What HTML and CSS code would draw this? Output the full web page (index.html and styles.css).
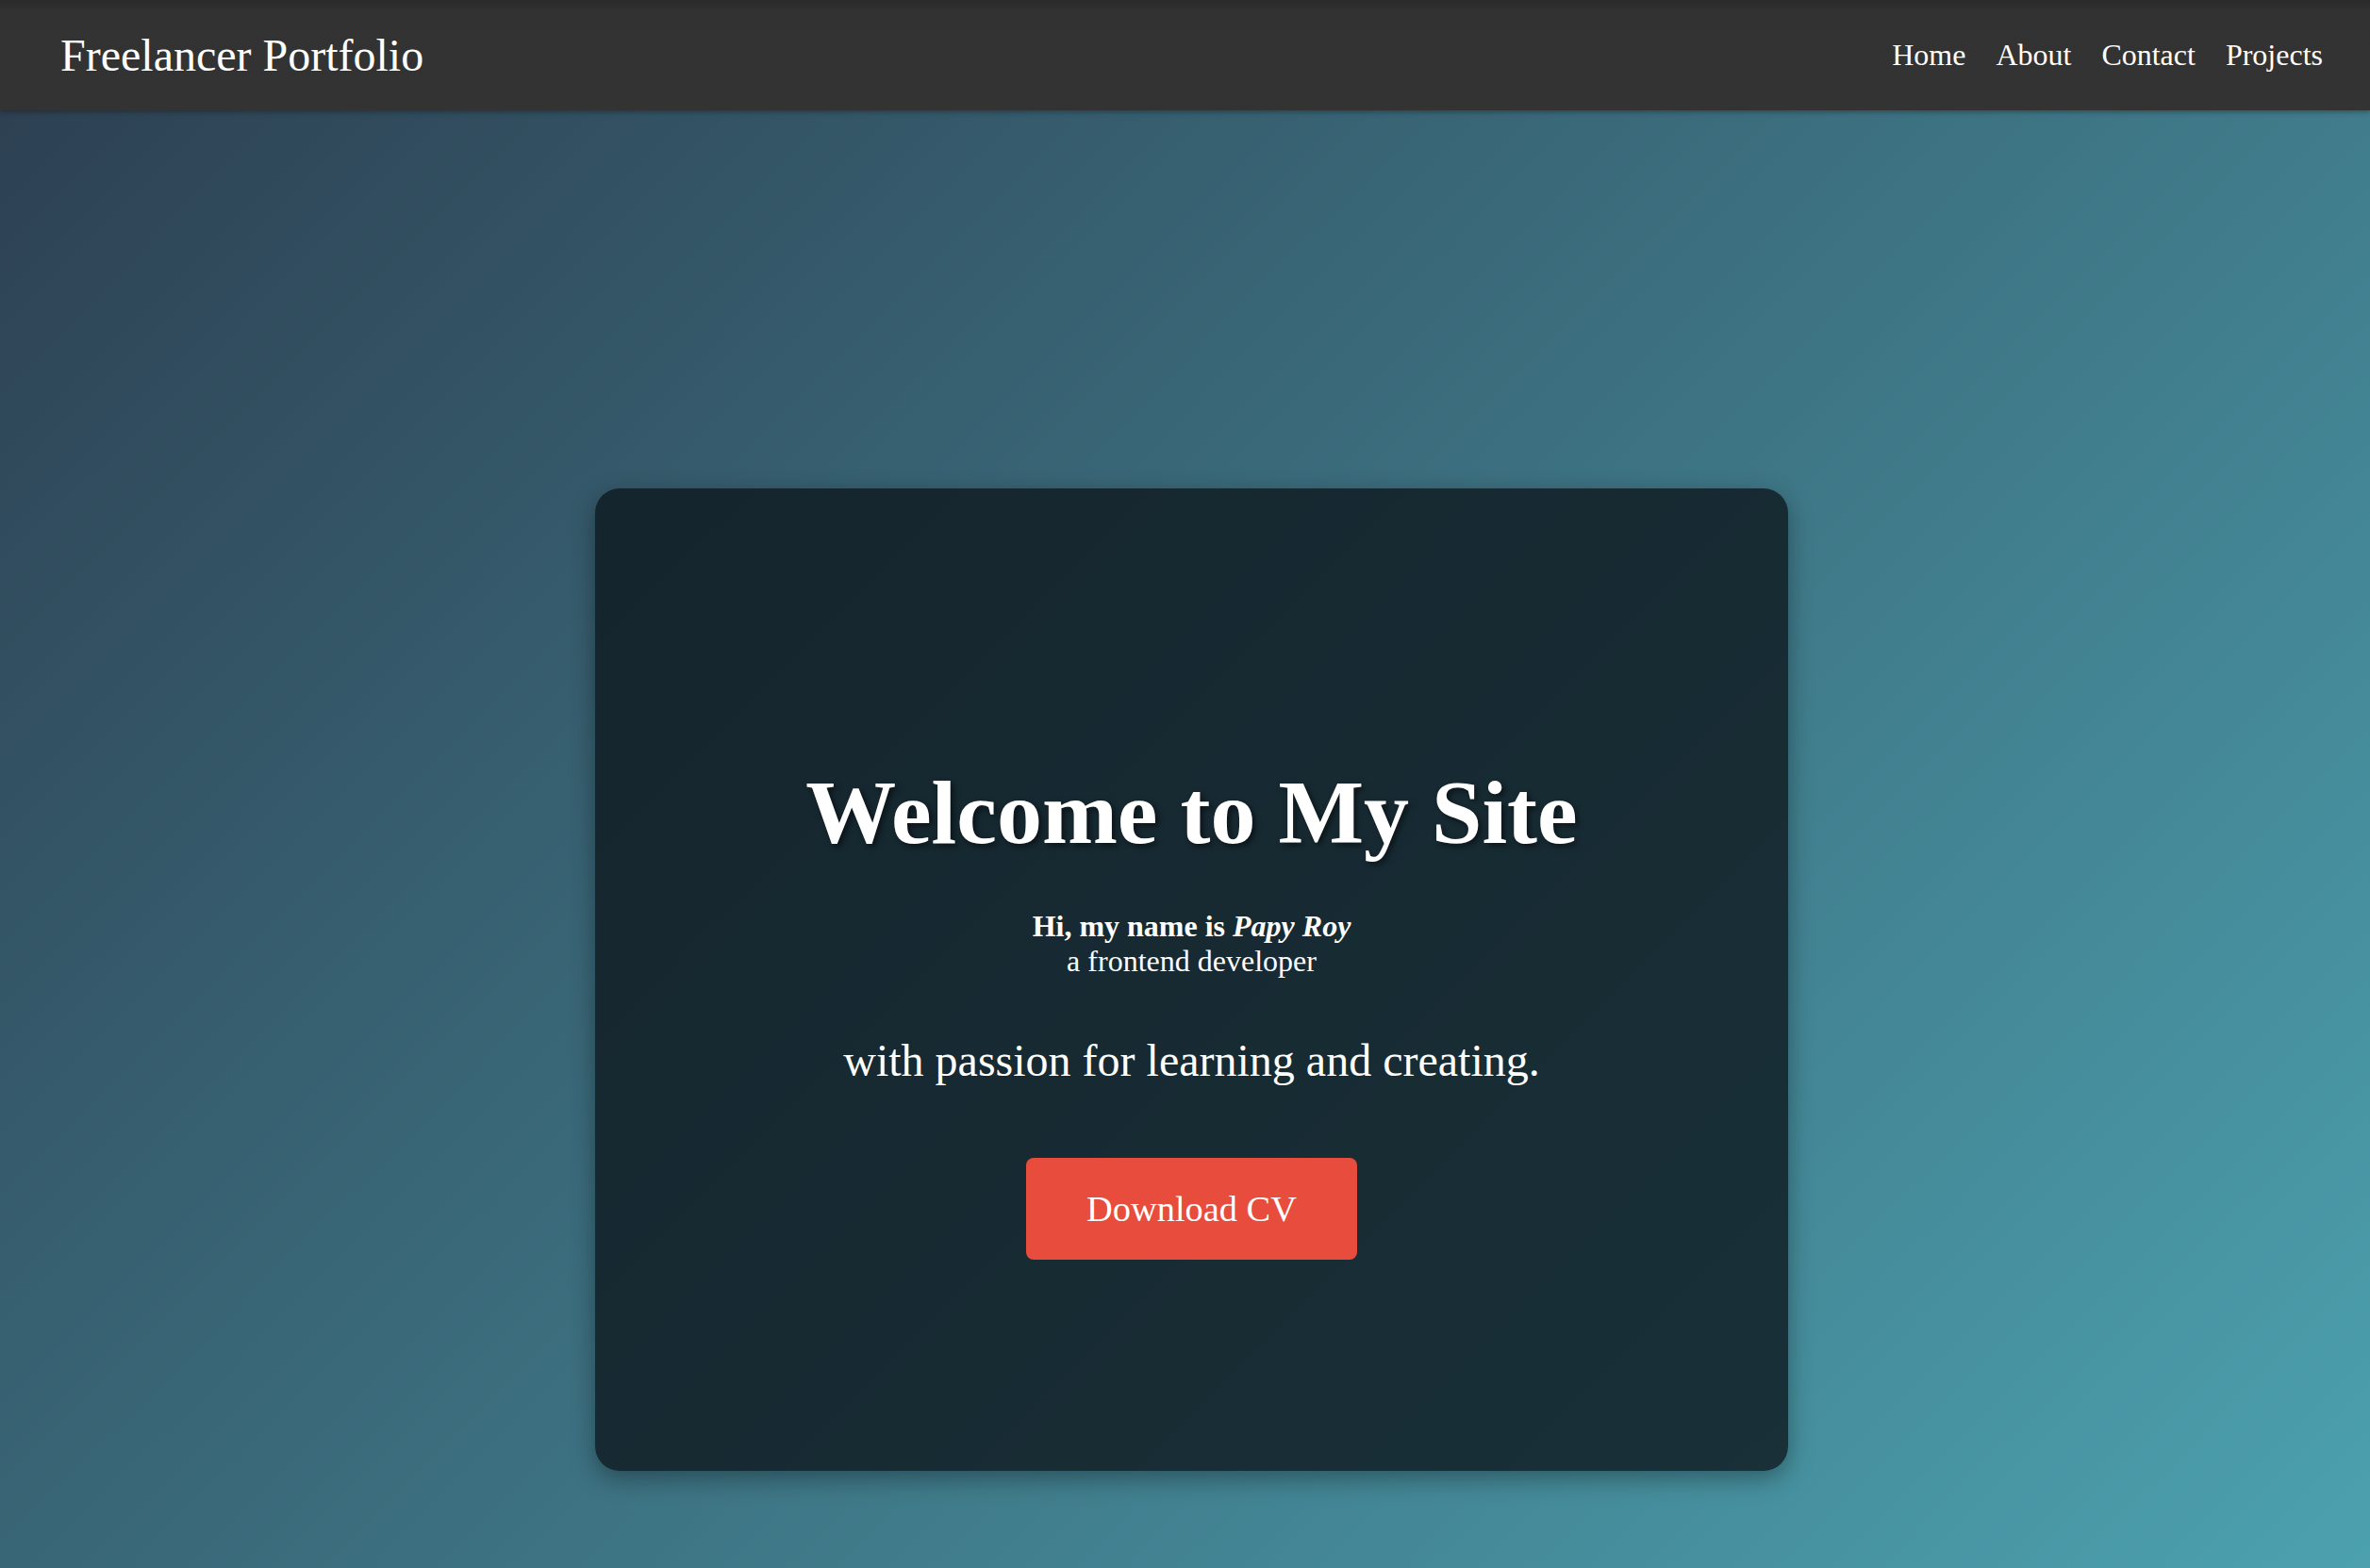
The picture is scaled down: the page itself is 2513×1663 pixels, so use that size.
FILE: index.html
```html
<!DOCTYPE html>
<html lang="en">
<head>
<meta charset="utf-8">
<title>Freelancer Portfolio</title>
<link rel="stylesheet" href="styles.css">
</head>
<body>
<header class="topbar">
  <div class="logo">Freelancer Portfolio</div>
  <nav class="nav">
    <a href="#">Home</a>
    <a href="#">About</a>
    <a href="#">Contact</a>
    <a href="#">Projects</a>
  </nav>
</header>
<main class="hero">
  <section class="card">
    <h1 class="title">Welcome to My Site</h1>
    <p class="intro"><strong>Hi, my name is <em>Papy Roy</em></strong><br>a frontend developer</p>
    <p class="tagline">with passion for learning and creating.</p>
    <a class="btn" href="#">Download CV</a>
  </section>
</main>
</body>
</html>
```
FILE: styles.css
```css
html, body {
  margin: 0;
  padding: 0;
}
body {
  min-height: 1663px;
  font-family: "Liberation Serif", "Times New Roman", serif;
  color: #fff;
  background: linear-gradient(135deg, #2c3e50, #4ca1af);
  overflow: hidden;
}
.topbar {
  height: 117px;
  box-sizing: border-box;
  display: flex;
  align-items: center;
  justify-content: space-between;
  padding: 0 50px 0 64px;
  background: linear-gradient(#292929, #323232 12px, #333333);
  box-shadow: 0 2px 5px rgba(0, 0, 0, 0.3);
  position: relative;
  z-index: 1;
}
.logo {
  font-size: 48px;
  line-height: normal;
}
.nav {
  display: flex;
  gap: 32px;
}
.nav a {
  color: #fff;
  text-decoration: none;
  font-size: 32px;
  line-height: normal;
}
.hero {
  display: flex;
  justify-content: center;
  padding: 401px 0 0 14px;
}
.card {
  width: 1265px;
  box-sizing: border-box;
  padding: 288px 64px 224px;
  display: flex;
  flex-direction: column;
  align-items: center;
  text-align: center;
  background: rgba(14, 24, 30, 0.8);
  border-radius: 26px;
  box-shadow: 0 8px 26px rgba(0, 0, 0, 0.35);
}
.title {
  margin: 0;
  font-size: 96px;
  font-weight: bold;
  line-height: normal;
  text-shadow: 3px 3px 6px rgba(0, 0, 0, 0.55);
}
.intro {
  margin: 47px 0 0;
  font-size: 32px;
  line-height: normal;
}
.tagline {
  margin: 59px 0 0;
  font-size: 48px;
  line-height: normal;
}
.btn {
  margin-top: 76px;
  display: inline-block;
  padding: 32px 64px;
  font-size: 38.4px;
  line-height: normal;
  color: #fff;
  text-decoration: none;
  background: #e74c3c;
  border-radius: 8px;
}
```
